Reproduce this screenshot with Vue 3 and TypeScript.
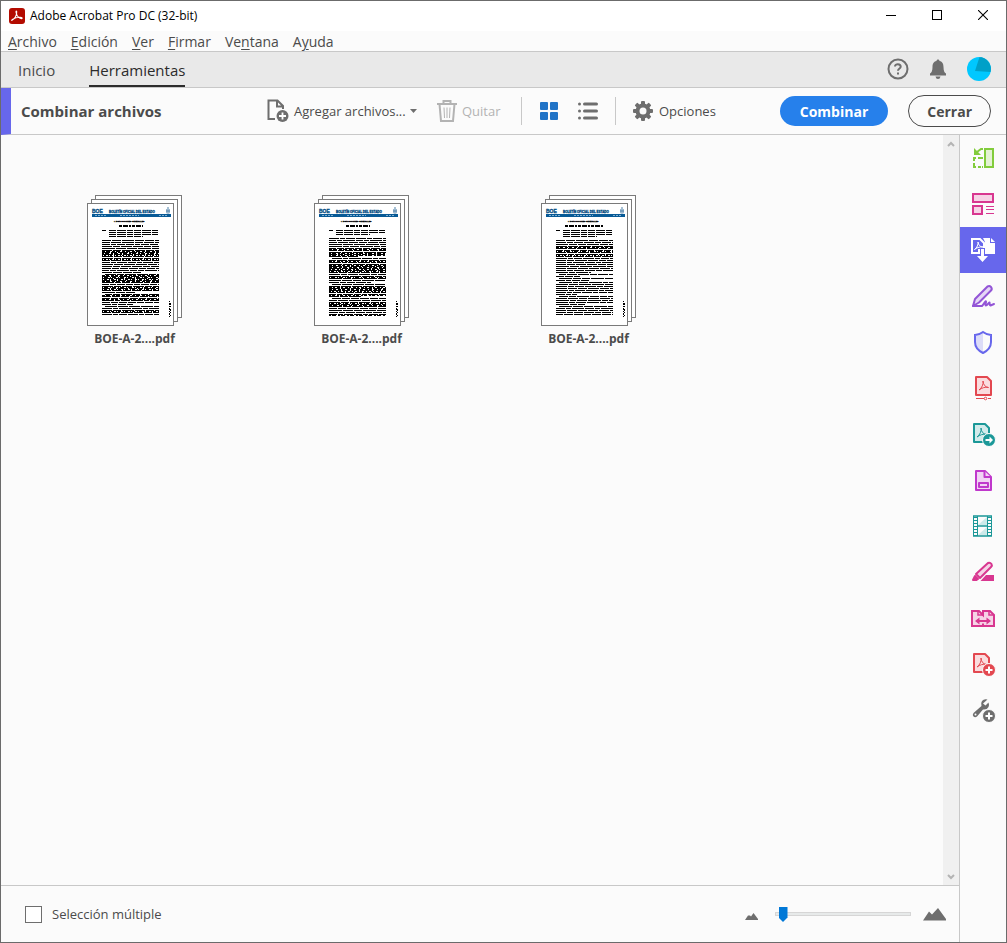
<script setup lang="ts">
import { ref } from 'vue'

interface TextRow {
  y: number
  x: number
  width: number
  dash: string
  weight: number
}

interface PdfFile {
  id: number
  name: string
  rows: TextRow[]
}

const menus = [
  { before: '', key: 'A', after: 'rchivo' },
  { before: '', key: 'E', after: 'dición' },
  { before: '', key: 'V', after: 'er' },
  { before: '', key: 'F', after: 'irmar' },
  { before: 'Ve', key: 'n', after: 'tana' },
  { before: 'A', key: 'y', after: 'uda' },
]

function buildRows(seed: number, intro: number, breaks: number[], thinFrom: number): TextRow[] {
  let state = seed
  const next = (n: number) => {
    state = (state * 1103 + 12345) % 65521
    return state % n
  }
  const rows: TextRow[] = []
  for (let i = 0; i < intro; i++) {
    rows.push({ y: 35 + i * 2, x: 22, width: i === intro - 1 ? 34 : 50, dash: '7 1 9 1 6 1', weight: 1 })
  }
  for (let y = 35 + intro * 2 + 2; y < 121; y += 2) {
    const last = breaks.includes(y)
    const first = breaks.includes(y - 2)
    rows.push({
      y,
      x: first ? 18 : 15,
      width: last ? 20 + next(25) : first ? 54 : 57,
      dash: `${7 + next(7)} 1 ${5 + next(6)} 1 ${8 + next(5)} 1`,
      weight: 1,
    })
    if (!last && y < thinFrom && next(5) < 2) {
      rows.push({ y: y + 1, x: 15, width: 57, dash: `${1 + next(3)} 1 ${2 + next(3)} 2`, weight: 1 })
    }
  }
  return rows
}

const files: PdfFile[] = [
  { id: 1, name: 'BOE-A-2....pdf', rows: buildRows(17, 4, [77, 97, 109], 118) },
  { id: 2, name: 'BOE-A-2....pdf', rows: buildRows(91, 3, [61, 87, 101], 120) },
  { id: 3, name: 'BOE-A-2....pdf', rows: buildRows(45, 4, [77, 81, 85, 99, 109], 78) },
]

const multiple = ref(false)
const zoom = ref(2)
</script>

<template>
  <div class="window">
    <header class="titlebar">
      <svg class="app-icon" width="16" height="16" viewBox="0 0 16 16">
        <rect width="16" height="16" rx="3" fill="#b30b00" />
        <path d="M3 12.2C5.8 11 8 6.800 7.700 3.700C7.500 2.600 6.700 3.200 7.100 4.600C7.700 7.500 10 10.300 12.500 10.600C13.800 10.500 13 9.300 11.200 9.200C8 9.100 5 10.300 3.400 11.400C2.400 12.200 2.700 12.700 3 12.200Z" fill="none" stroke="#fff" stroke-width="1.100" />
      </svg>
      <span class="app-title">Adobe Acrobat Pro DC (32-bit)</span>
      <div class="caption">
        <button type="button" aria-label="Minimizar">
          <svg width="10" height="10"><path d="M0 5.500H10" stroke="#000" /></svg>
        </button>
        <button type="button" aria-label="Maximizar">
          <svg width="10" height="10"><rect x=".5" y=".5" width="9" height="9" fill="none" stroke="#000" /></svg>
        </button>
        <button type="button" aria-label="Cerrar ventana">
          <svg width="10" height="10"><path d="M0 0L10 10M10 0L0 10" stroke="#000" stroke-width="1.100" /></svg>
        </button>
      </div>
    </header>

    <nav class="menubar">
      <button v-for="m in menus" :key="m.key" type="button">{{ m.before }}<u>{{ m.key }}</u>{{ m.after }}</button>
    </nav>

    <div class="tabs">
      <button type="button" class="tab">Inicio</button>
      <button type="button" class="tab active">Herramientas</button>
      <div class="account">
        <button type="button" aria-label="Ayuda">
          <svg width="22" height="22" viewBox="0 0 22 22" fill="none" stroke="#6e6e6e" stroke-width="2">
            <circle cx="11" cy="11" r="9.500" />
            <path d="M8 8.500C8 5.400 13.700 5.400 13.700 8.700C13.700 10.500 11 10.500 11 12.800M11 14.400V16.500" />
          </svg>
        </button>
        <button type="button" aria-label="Notificaciones">
          <svg width="18" height="20" viewBox="0 0 18 20" fill="#6e6e6e">
            <path d="M7.500 2C7.500 0 10.500 0 10.500 2C13.700 2.800 14.500 5 14.500 8C14.500 12 15.500 13.500 17 14.500V16.500H1V14.500C2.500 13.500 3.500 12 3.500 8C3.500 5 4.300 2.800 7.500 2ZM6.500 17.500H11.500Q11 20 9 20Q7 20 6.500 17.500Z" />
          </svg>
        </button>
        <button type="button" aria-label="Cuenta">
          <svg width="24" height="24" viewBox="0 0 24 24">
            <circle cx="12" cy="12" r="12" fill="#00c8ff" />
            <path d="M12 0A12 12 0 0 1 23.500 15L8 14L12.500 0Z" fill="#00a0c8" />
          </svg>
        </button>
      </div>
    </div>

    <div class="toolbar">
      <h1>Combinar archivos</h1>
      <div class="tools">
        <button type="button" class="add">
          <svg width="24" height="24" viewBox="0 0 24 24" fill="none" stroke="#6e6e6e" stroke-width="2">
            <path d="M9 20H2.500V1.500H11.500L17 7V10M11 1.500V7.500H17" />
            <circle cx="16.500" cy="17" r="6" fill="#6e6e6e" stroke="none" />
            <path d="M16.500 13.500V20.500M13 17H20" stroke="#fff" stroke-width="1.800" />
          </svg>
          <span>Agregar archivos...</span>
          <svg class="caret" width="7" height="4"><path d="M0 0H7L3.500 4Z" fill="#6e6e6e" /></svg>
        </button>
        <button type="button" class="remove" disabled>
          <svg width="20" height="22" viewBox="0 0 20 22" fill="none" stroke="#b3b3b3" stroke-width="2">
            <path d="M0 4H20M6.500 4V1H13.500V4M2.500 4L4 21H16L17.500 4" />
            <path d="M7 7.500L7.500 18M10 7.500V18M13 7.500L12.500 18" stroke-width="1" />
          </svg>
          <span>Quitar</span>
        </button>
        <i class="separator"></i>
        <div class="views">
          <button type="button" aria-label="Vista de miniaturas">
            <svg width="18" height="18" fill="#2173c6"><rect width="8" height="8" rx="1" /><rect x="10" width="8" height="8" rx="1" /><rect y="10" width="8" height="8" rx="1" /><rect x="10" y="10" width="8" height="8" rx="1" /></svg>
          </button>
          <button type="button" aria-label="Vista de lista">
            <svg width="20" height="18" fill="#6e6e6e">
              <circle cx="1.500" cy="2" r="1.500" /><circle cx="1.500" cy="9" r="1.500" /><circle cx="1.500" cy="16" r="1.500" />
              <rect x="5" y=".5" width="15" height="3" rx="1.500" /><rect x="5" y="7.500" width="15" height="3" rx="1.500" /><rect x="5" y="14.500" width="15" height="3" rx="1.500" />
            </svg>
          </button>
        </div>
        <i class="separator"></i>
        <button type="button" class="options">
          <svg width="20" height="20" viewBox="-10 -10 20 20">
            <g fill="#6e6e6e">
              <rect v-for="a in 4" :key="a" x="-2" y="-10" width="4" height="20" rx="1" :transform="`rotate(${a * 45})`" />
              <circle r="7.500" />
            </g>
            <circle r="3.500" fill="#fbfbfb" />
          </svg>
          <span>Opciones</span>
        </button>
      </div>
      <div class="actions">
        <button type="button" class="primary">Combinar</button>
        <button type="button" class="secondary">Cerrar</button>
      </div>
    </div>

    <div class="workspace">
      <div class="content">
        <div class="scroller">
          <main class="files">
            <figure v-for="f in files" :key="f.id">
              <svg class="thumb" width="95" height="131" viewBox="0 0 95 131">
                <g fill="#fff" stroke="#7a7a7a">
                  <rect x="8.500" y=".5" width="86" height="122" />
                  <rect x="4.500" y="4.500" width="86" height="122" />
                  <rect x=".5" y="8.500" width="86" height="122" />
                </g>
                <text x="5" y="18" class="boe">BOE</text>
                <text x="22" y="18" class="gazette">BOLETÍN OFICIAL DEL ESTADO</text>
                <path d="M79 14H83V18L81 19L79 18Z" fill="#9fbad0" />
                <path d="M80 13H82M79 16H83" stroke="#4e82aa" />
                <path d="M5 20.500H84" stroke="#075a96" stroke-width="3" />
                <path d="M8 20.500H20M33 20.500H52M72 20.500H80" stroke="#7eadd0" stroke-dasharray="2 1" />
                <text x="27" y="27" class="heading">I. DISPOSICIONES GENERALES</text>
                <g class="rows" stroke="#000">
                  <path :d="f.id === 3 ? 'M24 31H62' : 'M32 31H56'" stroke-width="2" stroke-dasharray="3 1 5 1 2 1" />
                  <path d="M15 35.500H19" />
                  <path v-for="(r, i) in f.rows" :key="i" :d="`M${r.x} ${r.y + 0.5}h${r.width}`" :stroke-width="r.weight" :stroke-dasharray="r.dash" />
                  <path d="M82.500 106V122" stroke-dasharray="1 1 2 1" />
                  <path d="M83.500 108V121" stroke-dasharray="2 1 1 2" />
                </g>
              </svg>
              <figcaption>{{ f.name }}</figcaption>
            </figure>
          </main>
          <div class="scrollbar">
            <button type="button" aria-label="Subir"><svg width="8" height="6"><path d="M1 5L4 2L7 5" fill="none" stroke="#b4b4b4" stroke-width="2" /></svg></button>
            <button type="button" aria-label="Bajar"><svg width="8" height="6"><path d="M1 1L4 4L7 1" fill="none" stroke="#b4b4b4" stroke-width="2" /></svg></button>
          </div>
        </div>
        <footer class="footer">
          <label class="multi"><input v-model="multiple" type="checkbox" /><span>Selección múltiple</span></label>
          <div class="sizer">
            <svg class="small-hills" width="13" height="8"><path d="M0 7L3 2.500L5 2.500L6 3.500L8.500 0L13 6V7Z" fill="#6e6e6e" /></svg>
            <input v-model="zoom" type="range" min="0" max="100" aria-label="Tamaño de miniatura" />
            <svg width="23" height="13"><path d="M0 12.500L6 3.500L9 6.500L15 0L23 11V12.500Z" fill="#6e6e6e" /></svg>
          </div>
        </footer>
      </div>

      <aside class="sidebar">
        <button type="button" aria-label="Organizar páginas">
          <svg viewBox="0 0 26 26" fill="none" stroke="#82cc3c" stroke-width="2">
            <rect x="15" y="4" width="8" height="18" fill="#e4f2d4" />
            <path d="M3 13H6M8 13H13M3 22H6M8 22H11M12 22H13" />
            <path d="M4 14V16M4 18V21" />
            <path d="M13 4H11L7 7" />
            <path d="M4 3V10H11Z" fill="#82cc3c" stroke="none" />
          </svg>
        </button>
        <button type="button" aria-label="Editar PDF">
          <svg viewBox="0 0 26 26" fill="#f6d3e6" stroke="#d83790" stroke-width="2">
            <rect x="3" y="3" width="20" height="8" />
            <rect x="3" y="15" width="9" height="8" />
            <path d="M16 15.500H24M16 18.500H24M16 22.500H24" stroke-width="1" />
          </svg>
        </button>
        <button type="button" class="selected" aria-label="Combinar archivos">
          <svg viewBox="0 0 26 26" fill="none" stroke="#fff">
            <path d="M13 1H20V6H25V17H15V5Z" fill="#fff" stroke="none" />
            <path d="M21 1L25 5H21Z" fill="#fff" stroke="none" />
            <path d="M9 16H2V2H10L14 6V13H9Z" fill="#6767ec" stroke-width="2" />
            <path d="M4.500 12.500C7 11 8.500 7 8 5C8.500 8 10 10 13 10C9 9.500 6.500 11 4.500 12.500Z" />
            <path d="M10 11H15V18H19L12.500 26L6 18H10Z" fill="#6767ec" stroke="none" />
            <path d="M11 12H14V19H18L12.500 25L7 19H11Z" fill="#fff" stroke="none" />
          </svg>
        </button>
        <button type="button" aria-label="Firmar">
          <svg viewBox="0 0 26 26" fill="none" stroke="#9355d6" stroke-width="2" stroke-linejoin="round" stroke-linecap="round">
            <path d="M3 23L5 16L17.500 3.500Q19.500 2.500 21 4Q22.500 6 21 7.500L9 19.500Z" fill="#e5d6f6" />
            <path d="M3 23H12C14 21 15.500 17.500 16 18.500C16.500 19.500 14.500 22 16 22.500C18 22.500 18.500 19 19.500 19.500C20 20.500 19 22 20.500 22.500L24 21" />
          </svg>
        </button>
        <button type="button" aria-label="Proteger">
          <svg viewBox="0 0 26 26">
            <path d="M13 3L5 6V13Q5 20 13 24Z" fill="#dcdcf8" />
            <path d="M13 3Q17 6 21 6V13Q21 20 13 24Q5 20 5 13V6Q9 6 13 3Z" fill="none" stroke="#6767ec" stroke-width="2" />
          </svg>
        </button>
        <button type="button" aria-label="Optimizar PDF">
          <svg viewBox="0 0 26 26" fill="none" stroke="#e34850">
            <path d="M6 2H17L21 6V20H6Z" fill="#fadcde" stroke-width="2" stroke-linejoin="round" />
            <path d="M9 15C12 13 13.500 9 13 6C13.500 10 15 12 18.500 12.500C15 11.500 12 13 9 15Z" />
            <path d="M6 23.500H14M18 23.500H21" />
            <circle cx="15.500" cy="23.500" r="1.300" />
          </svg>
        </button>
        <button type="button" aria-label="Exportar PDF">
          <svg viewBox="0 0 26 26" fill="none" stroke="#1b9898">
            <path d="M4 3H15L19 7V21H4Z" fill="#d2ebeb" stroke-width="2" stroke-linejoin="round" />
            <path d="M7 16C10 14 11.500 10 11 7C11.500 11 13 13 16.500 13.500C13 12.500 10 14 7 16Z" />
            <circle cx="19" cy="19" r="6.500" fill="#1b9898" stroke="#fbfbfb" />
            <path d="M15.500 19H21" stroke="#fff" stroke-width="2" />
            <path d="M19.500 15.500L23 19L19.500 22.500Z" fill="#fff" stroke="none" />
          </svg>
        </button>
        <button type="button" aria-label="Preparar formulario">
          <svg viewBox="0 0 26 26" fill="#f1d3f4" stroke="#c038cc" stroke-width="2" stroke-linejoin="round">
            <path d="M6 4H15L21 10V23H6Z" /><path d="M14.500 4V10H21" /><rect x="9" y="16" width="9" height="4" />
          </svg>
        </button>
        <button type="button" aria-label="Multimedia">
          <svg viewBox="0 0 26 26" fill="none" stroke="#1b9898">
            <path d="M17 4V12H8ZM17 14V22H8Z" fill="#cdeaea" stroke="none" />
            <path d="M3 3H22M3 23H22M7 13H18" stroke-width="1.500" />
            <path d="M3.500 3V23M7.500 3V23M17.500 3V23M21.500 3V23" />
            <path d="M5.500 4V23M19.500 4V23" stroke-width="3" stroke-dasharray="1 2" />
          </svg>
        </button>
        <button type="button" aria-label="Comentar">
          <svg viewBox="0 0 26 26" stroke="#d83790" stroke-width="2" fill="#f6d3e6" stroke-linejoin="round">
            <path d="M6 15L18 4Q20 3 21.500 5Q22.500 6.500 21 8L10 19Z" />
            <path d="M5 17L8 20L6.500 21H3Z" fill="#d83790" />
            <path d="M16 16H24V22H10.500Z" fill="#d83790" stroke="none" />
          </svg>
        </button>
        <button type="button" aria-label="Comparar archivos">
          <svg viewBox="0 0 26 26" fill="none" stroke="#d83790" stroke-width="2">
            <path d="M2 6H9L13 10L13 6H20L24 10V21H2Z" fill="#f6d3e6" />
            <path d="M8 6V10H13M19 6V10H24" stroke-width="1.500" />
            <path d="M13 18.500V21" />
            <path d="M8 16H18" /><path d="M5 16L9.500 12.500V19.500ZM21 16L16.500 12.500V19.500Z" fill="#d83790" stroke="none" />
          </svg>
        </button>
        <button type="button" aria-label="Crear PDF">
          <svg viewBox="0 0 26 26" fill="none" stroke="#e34850">
            <path d="M4 3H15L19 7V21H4Z" fill="#fadcde" stroke-width="2" stroke-linejoin="round" />
            <path d="M7 16C10 14 11.500 10 11 7C11.500 11 13 13 16.500 13.500C13 12.500 10 14 7 16Z" />
            <circle cx="19" cy="19" r="6.500" fill="#e34850" stroke="#fbfbfb" />
            <path d="M19 15.500V22.500M15.500 19H22.500" stroke="#fff" stroke-width="2" />
          </svg>
        </button>
        <button type="button" aria-label="Más herramientas">
          <svg viewBox="0 0 26 26" fill="none" stroke="#6e6e6e">
            <path d="M17.500 2.500Q14 1.500 12 4Q10.500 6 11.500 9L3.500 16Q2 18 3.500 19.500Q5 21 7 19.500L13 12.500Q17 13 18.500 10Q19.500 8 18.500 5.500L15.500 8.500L13 6.500Z" fill="#6e6e6e" stroke="none" />
            <circle cx="5.500" cy="17.500" r="1" fill="#fbfbfb" stroke="none" />
            <circle cx="19" cy="19" r="6.500" fill="#6e6e6e" stroke="#fbfbfb" />
            <path d="M19 15.500V22.500M15.500 19H22.500" stroke="#fff" stroke-width="2" />
          </svg>
        </button>
      </aside>
    </div>
  </div>
</template>

<style>
body {
  margin: 0;
}
</style>

<style scoped>
.window {
  box-sizing: border-box;
  min-height: 100vh;
  display: flex;
  flex-direction: column;
  border: 1px solid #6b6b6b;
  background: #fbfbfb;
  color: #4b4b4b;
  font-family: "Open Sans", "Noto Sans", sans-serif;
  font-size: 13px;
}
button {
  display: flex;
  align-items: center;
  justify-content: center;
  padding: 0;
  border: 0;
  background: none;
  color: inherit;
  font: inherit;
  white-space: nowrap;
}
svg {
  display: block;
  flex: none;
}
.titlebar {
  display: flex;
  align-items: center;
  height: 30px;
  padding-left: 8px;
  background: #fff;
  color: #000;
}
.app-title {
  margin-left: 5px;
  font-size: 12px;
  line-height: 16px;
}
.caption {
  display: flex;
  align-self: stretch;
  margin-left: auto;
  padding-bottom: 2px;
}
.caption button {
  width: 46px;
}
.menubar {
  display: flex;
  gap: 14px;
  height: 20px;
  padding-left: 7px;
  border-bottom: 1px solid #c8c8c8;
  font-size: 14px;
  line-height: 22px;
}
.menubar button {
  display: block;
  line-height: 22px;
}
.menubar u {
  text-underline-offset: 2px;
}
.tabs {
  display: flex;
  gap: 34px;
  height: 35px;
  padding: 0 15px 0 17px;
  border-bottom: 1px solid #c8c8c8;
  background: #e9e9e9;
}
.tab {
  box-sizing: border-box;
  border-top: 2px solid transparent;
  border-bottom: 2px solid transparent;
  font-size: 15px;
}
.tab.active {
  border-bottom-color: #2c2c2c;
  color: #2c2c2c;
}
.account {
  display: flex;
  align-items: center;
  gap: 20px;
  margin-left: auto;
  padding-bottom: 1px;
}
.toolbar {
  display: grid;
  grid-template-columns: 255px 1fr auto;
  align-items: center;
  height: 46px;
  padding-right: 15px;
  border-bottom: 1px solid #c8c8c8;
  border-left: 10px solid #6767ec;
}
h1 {
  margin: 0;
  padding-left: 10px;
  font-size: 15px;
  font-weight: 700;
  line-height: 20px;
}
.tools,
.actions,
.views {
  display: flex;
  align-items: center;
}
.tools button {
  justify-content: flex-start;
}
.add {
  gap: 4px;
  min-width: 151px;
}
.caret {
  margin-left: auto;
}
.remove {
  gap: 5px;
  min-width: 65px;
  margin: 0 19px 0 20px;
  color: #b3b3b3;
}
.separator {
  width: 1px;
  height: 28px;
  background: #c8c8c8;
}
.views {
  gap: 20px;
  margin: 0 17px 0 18px;
}
.options {
  gap: 6px;
  margin-left: 17px;
}
.actions {
  gap: 20px;
}
.actions button {
  box-sizing: border-box;
  padding: 0 20px;
  border-radius: 16px;
  font-size: 14px;
  font-weight: 700;
}
.actions .primary {
  height: 30px;
  background: #2680eb;
  color: #fff;
}
.actions .secondary {
  height: 32px;
  padding: 0 18px;
  border: 1px solid #4b4b4b;
}
.workspace {
  display: flex;
  flex: 1;
}
.content {
  display: flex;
  flex: 1;
  flex-direction: column;
  min-width: 0;
}
.scroller {
  display: flex;
  flex: 1;
}
.files {
  display: grid;
  flex: 1;
  grid-template-columns: repeat(auto-fill, 227px);
  align-content: start;
  padding: 60px 0 0 20px;
}
figure {
  display: flex;
  flex-direction: column;
  align-items: center;
  margin: 0;
}
.boe,
.gazette,
.heading {
  font-family: "Liberation Sans", Arial, sans-serif;
  font-weight: 700;
}
.boe,
.gazette {
  fill: #004a80;
  stroke: #004a80;
  stroke-width: .3;
}
.boe {
  font-size: 5px;
}
.gazette {
  font-size: 3px;
}
.heading {
  font-size: 2px;
  stroke: #000;
  stroke-width: .3;
}
.rows {
  shape-rendering: crispEdges;
}
figcaption {
  margin-top: 5px;
  font-size: 12px;
  font-weight: 700;
  line-height: 16px;
}
.scrollbar {
  display: flex;
  flex-direction: column;
  justify-content: space-between;
  width: 16px;
  background: #f0f0f0;
}
.scrollbar button {
  height: 17px;
}
.footer {
  display: flex;
  align-items: center;
  justify-content: space-between;
  height: 56px;
  padding: 0 13px 0 24px;
  border-top: 1px solid #c8c8c8;
}
.multi,
.sizer {
  display: flex;
  align-items: center;
}
.multi {
  gap: 10px;
}
.multi input {
  box-sizing: border-box;
  width: 17px;
  height: 17px;
  margin: 0;
  border: 1px solid #6e6e6e;
  background: #fff;
  appearance: none;
}
.multi input:checked {
  background: #2680eb;
}
.sizer {
  gap: 12px;
}
.small-hills {
  margin: 6px 5px 0 0;
}
.sizer input {
  width: 136px;
  height: 20px;
  margin: 0;
  background: none;
  appearance: none;
}
.sizer input::-webkit-slider-runnable-track {
  box-sizing: border-box;
  height: 4px;
  border: 1px solid #d6d6d6;
  background: #e7eaea;
}
.sizer input::-webkit-slider-thumb {
  width: 9px;
  height: 15px;
  margin-top: -6px;
  background: #0078d7;
  clip-path: polygon(0 0, 100% 0, 100% 70%, 50% 100%, 0 70%);
  appearance: none;
}
.sidebar {
  width: 46px;
  border-left: 1px solid #c8c8c8;
}
.sidebar button {
  width: 46px;
  height: 46px;
}
.sidebar svg {
  width: 26px;
  height: 26px;
}
.sidebar .selected {
  background: #6767ec;
}
</style>
